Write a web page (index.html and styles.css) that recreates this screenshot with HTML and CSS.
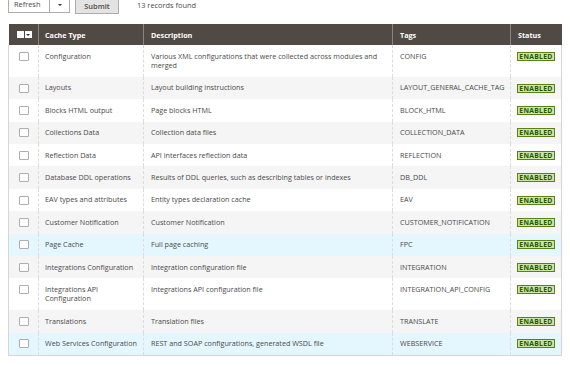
FILE: index.html
```html
<!DOCTYPE html>
<html lang="en">
<head>
    <meta charset="UTF-8">
    <title>Cache Management</title>
    <link rel="stylesheet" href="styles.css">
</head>
<body>
<div class="page">
    <div class="toolbar">
        <div class="select">
            <span class="select-label">Refresh</span>
            <span class="select-arrow"><i class="caret"></i></span>
        </div>
        <button class="btn">Submit</button>
        <span class="records">13 records found</span>
    </div>

    <table class="grid">
        <colgroup>
            <col class="c-check">
            <col class="c-type">
            <col class="c-desc">
            <col class="c-tags">
            <col class="c-status">
        </colgroup>
        <thead>
        <tr>
            <th class="th-check">
                <div class="mass-select">
                    <span class="mass-box"></span>
                    <span class="mass-arrow"><i class="caret"></i></span>
                </div>
            </th>
            <th>Cache Type</th>
            <th>Description</th>
            <th>Tags</th>
            <th>Status</th>
        </tr>
        </thead>
        <tbody>
        <tr>
            <td><span class="checkbox"></span></td>
            <td>Configuration</td>
            <td>Various XML configurations that were collected across modules and merged</td>
            <td>CONFIG</td>
            <td><span class="badge">ENABLED</span></td>
        </tr>
        <tr class="odd">
            <td><span class="checkbox"></span></td>
            <td>Layouts</td>
            <td>Layout building instructions</td>
            <td>LAYOUT_GENERAL_CACHE_TAG</td>
            <td><span class="badge">ENABLED</span></td>
        </tr>
        <tr>
            <td><span class="checkbox"></span></td>
            <td>Blocks HTML output</td>
            <td>Page blocks HTML</td>
            <td>BLOCK_HTML</td>
            <td><span class="badge">ENABLED</span></td>
        </tr>
        <tr class="odd">
            <td><span class="checkbox"></span></td>
            <td>Collections Data</td>
            <td>Collection data files</td>
            <td>COLLECTION_DATA</td>
            <td><span class="badge">ENABLED</span></td>
        </tr>
        <tr>
            <td><span class="checkbox"></span></td>
            <td>Reflection Data</td>
            <td>API interfaces reflection data</td>
            <td>REFLECTION</td>
            <td><span class="badge">ENABLED</span></td>
        </tr>
        <tr class="odd">
            <td><span class="checkbox"></span></td>
            <td>Database DDL operations</td>
            <td>Results of DDL queries, such as describing tables or indexes</td>
            <td>DB_DDL</td>
            <td><span class="badge">ENABLED</span></td>
        </tr>
        <tr>
            <td><span class="checkbox"></span></td>
            <td>EAV types and attributes</td>
            <td>Entity types declaration cache</td>
            <td>EAV</td>
            <td><span class="badge">ENABLED</span></td>
        </tr>
        <tr class="odd">
            <td><span class="checkbox"></span></td>
            <td>Customer Notification</td>
            <td>Customer Notification</td>
            <td>CUSTOMER_NOTIFICATION</td>
            <td><span class="badge">ENABLED</span></td>
        </tr>
        <tr class="active">
            <td><span class="checkbox"></span></td>
            <td>Page Cache</td>
            <td>Full page caching</td>
            <td>FPC</td>
            <td><span class="badge">ENABLED</span></td>
        </tr>
        <tr class="odd">
            <td><span class="checkbox"></span></td>
            <td>Integrations Configuration</td>
            <td>Integration configuration file</td>
            <td>INTEGRATION</td>
            <td><span class="badge">ENABLED</span></td>
        </tr>
        <tr>
            <td><span class="checkbox"></span></td>
            <td>Integrations API Configuration</td>
            <td>Integrations API configuration file</td>
            <td>INTEGRATION_API_CONFIG</td>
            <td><span class="badge">ENABLED</span></td>
        </tr>
        <tr class="odd">
            <td><span class="checkbox"></span></td>
            <td>Translations</td>
            <td>Translation files</td>
            <td>TRANSLATE</td>
            <td><span class="badge">ENABLED</span></td>
        </tr>
        <tr class="active">
            <td><span class="checkbox"></span></td>
            <td>Web Services Configuration</td>
            <td>REST and SOAP configurations, generated WSDL file</td>
            <td>WEBSERVICE</td>
            <td><span class="badge">ENABLED</span></td>
        </tr>
        </tbody>
    </table>
</div>
</body>
</html>
```

FILE: styles.css
```css
* {
    padding: 0;
    margin: 0;
    box-sizing: border-box;
}

body {
    font-family: "Open Sans", "Liberation Sans", sans-serif;
    font-size: 7.2px;
    color: #4a4a4a;
    background: #fff;
}

.page {
    padding: 0 9px 0 8px;
}

/* toolbar */
.toolbar {
    display: flex;
    align-items: center;
    height: 17px;
    margin-top: -4px;
}

.select {
    display: flex;
    width: 62px;
    height: 17px;
    border: 1px solid #adadad;
    background: #fff;
}

.select-label {
    flex: 1;
    line-height: 15px;
    padding-left: 5px;
    font-size: 7.4px;
}

.select-arrow {
    width: 20px;
    border-left: 1px solid #adadad;
    display: flex;
    align-items: center;
    justify-content: center;
}

.caret {
    display: block;
    width: 0;
    height: 0;
    border-left: 2px solid transparent;
    border-right: 2px solid transparent;
    border-top: 2.5px solid #333;
}

.btn {
    margin-left: 5px;
    width: 44px;
    height: 18px;
    border: 1px solid #adadad;
    background: #e3e3e3;
    color: #514943;
    font-family: inherit;
    font-size: 7.4px;
    font-weight: 600;
    padding-top: 3px;
}

.records {
    margin-left: 18px;
    font-size: 7.4px;
}

/* grid */
.grid {
    margin-top: 11px;
    width: 553px;
    table-layout: fixed;
    border-collapse: collapse;
}

.c-check { width: 30px; }
.c-type { width: 105px; }
.c-desc { width: 249px; }
.c-tags { width: 118px; }
.c-status { width: 51px; }

.grid th {
    height: 21px;
    background: #514943;
    color: #fff;
    font-weight: 700;
    text-align: left;
    padding: 0 4px 0 6px;
    border-left: 1px solid #8a837f;
}

.grid th:first-child {
    border-left: none;
}

.grid th + th + th {
    padding-left: 7px;
}

.mass-select {
    display: flex;
    width: 15px;
    height: 7px;
    margin: 0 auto;
}

.mass-box {
    width: 7px;
    background: #fff;
}

.mass-arrow {
    flex: 1;
    margin-left: 1px;
    background: #fff;
    display: flex;
    align-items: center;
    justify-content: center;
}

.grid td {
    vertical-align: top;
    padding: 6.5px 3px 6.5px 6px;
    line-height: 9.4px;
    border-left: 1px dashed #dcdcdc;
}

.grid td + td + td {
    padding-left: 7px;
}

.grid td:first-child {
    border-left: 1px solid #d6d6d6;
    padding: 6.8px 0 0;
}

.grid td:last-child {
    border-right: 1px solid #d6d6d6;
    padding-left: 6px;
}

.grid tbody tr:last-child td {
    border-bottom: 1px solid #d6d6d6;
}

.grid tr.odd td {
    background: #f5f5f5;
}

.grid tr.active td {
    background: #e5f7fe;
}

.checkbox {
    display: block;
    width: 10px;
    height: 9px;
    margin: 0 auto;
    background: #fff;
    border: 1px solid #adadad;
    border-radius: 1px;
}

.badge {
    display: block;
    width: 38px;
    height: 9px;
    margin-top: 0.3px;
    border: 1px solid #5b8116;
    background: #d0e3a7;
    color: #185b00;
    font-weight: 700;
    font-size: 6.8px;
    line-height: 7px;
    letter-spacing: 0.3px;
    text-align: center;
}
```
